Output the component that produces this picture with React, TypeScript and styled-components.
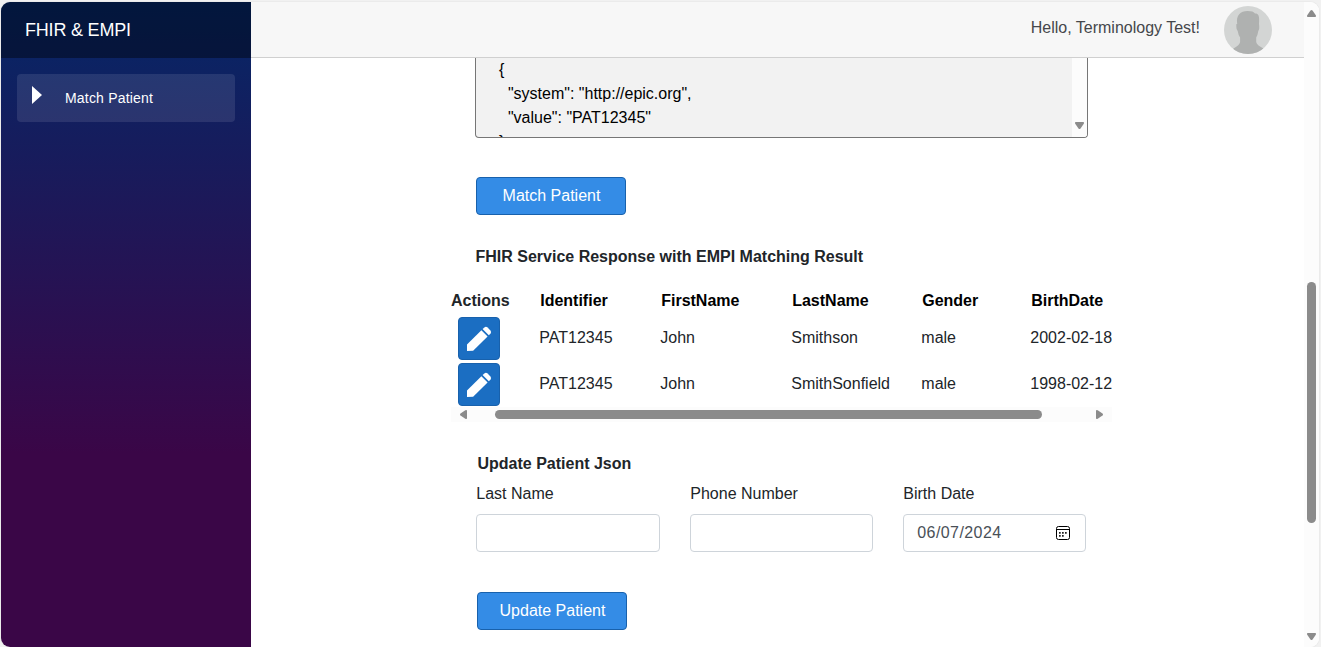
import React from "react";
import styled, { createGlobalStyle } from "styled-components";

const GlobalStyle = createGlobalStyle`
  *, *::before, *::after { box-sizing: border-box; }
  html, body { margin: 0; height: 100%; overflow: hidden; }
  body {
    background: #f1f1f1;
    color: #212529;
    font: 16px/24px "Liberation Sans", Arial, sans-serif;
  }
`;

const Frame = styled.div`
  display: flex;
  width: 1318px;
  height: 645px;
  margin: 2px 0 0 1px;
  border-radius: 9px;
  overflow: hidden;
  background: #fff;
  box-shadow: 0 0 0 1px #ebebeb;
`;

const Sidebar = styled.aside`
  flex: none;
  width: 250px;
  background: linear-gradient(180deg, rgb(5, 39, 103) 0%, #3a0647 70%);
`;

const Brand = styled.div`
  display: flex;
  align-items: center;
  height: 56px;
  padding: 0 24px;
  background: rgba(0, 0, 0, 0.4);
  color: #fff;
  font-size: 18px;
  letter-spacing: -0.2px;
`;

const NavItem = styled.a`
  display: flex;
  align-items: center;
  height: 48px;
  margin: 16px;
  padding: 0 15px;
  border-radius: 4px;
  background: rgba(255, 255, 255, 0.1);
  color: #fff;
  font-size: 14px;
  letter-spacing: 0.19px;

  svg {
    margin: 0 23px 6px 0;
  }
`;

const Main = styled.main`
  flex: 1;
  min-width: 0;
  display: flex;
  flex-direction: column;
`;

const TopBar = styled.header`
  flex: none;
  display: flex;
  align-items: center;
  justify-content: flex-end;
  height: 56px;
  padding-right: 32px;
  border-bottom: 1px solid #d0d0d0;
  background: #f7f7f7;
`;

const Greeting = styled.span`
  margin: 0 24px 4px 0;
  color: #45474b;
`;

const Content = styled.div`
  display: flex;
  flex-direction: column;
  align-items: flex-start;
  padding-left: 224px;
`;

const JsonBox = styled.div`
  display: flex;
  justify-content: space-between;
  width: 613px;
  height: 80px;
  overflow: hidden;
  border: 1px solid #767676;
  border-top: 0;
  border-radius: 0 0 4px 4px;
  background: #f2f2f2;
  color: #000;
`;

const Json = styled.pre`
  margin: 0;
  padding-left: 23px;
  font: inherit;
`;

const JsonTrack = styled.div`
  display: flex;
  align-items: flex-end;
  justify-content: center;
  width: 15px;
  padding-bottom: 8px;
  background: #fcfcfc;
`;

const Button = styled.button<{ $top: number; $left: number }>`
  width: 150px;
  height: 38px;
  margin: ${(p) => p.$top}px 0 0 ${(p) => p.$left}px;
  padding: 0 0 0 1px;
  border: 1px solid #1861ac;
  border-radius: 4px;
  background: #348ce6;
  color: #fff;
  font: inherit;
  line-height: 36px;
`;

const Heading = styled.h2<{ $top: number; $left: number }>`
  margin: ${(p) => p.$top}px 0 0 ${(p) => p.$left}px;
  font-size: 16px;
  line-height: 24px;
  font-weight: 700;
`;

const TableScroller = styled.div`
  width: 661px;
  margin: 19px 0 0 -24px;
  overflow: hidden;
`;

const Table = styled.table`
  width: 661px;
  table-layout: fixed;
  border-collapse: collapse;
  white-space: nowrap;
`;

const Th = styled.th<{ $muted?: boolean }>`
  height: 26px;
  padding: 0 0 1px ${(p) => (p.$muted ? 0 : 1.2)}px;
  color: ${(p) => (p.$muted ? "#212529" : "#000")};
  text-align: left;
  font-weight: 700;
`;

const ActionCell = styled.td`
  height: 46px;
  padding: 0;
`;

const Td = styled.td`
  height: 46px;
  padding: 2px 0 0 0.3px;
  line-height: 20px;
`;

const EditButton = styled.button`
  display: flex;
  align-items: center;
  justify-content: center;
  width: 42px;
  height: 43px;
  margin: 3px 0 0 7px;
  padding: 0;
  border: 1px solid #1861ac;
  border-radius: 4px;
  background: #1b6ec2;
  color: #fff;
`;

const HTrack = styled.div`
  display: flex;
  align-items: center;
  height: 15px;
  margin-top: 1px;
  padding: 0 8px 0 9px;
  background: #fcfcfc;
`;

const HThumb = styled.div`
  width: 547px;
  height: 9px;
  margin: 0 54px 0 28px;
  border-radius: 5px;
  background: #8b8b8b;
`;

const Fields = styled.div`
  display: grid;
  grid-template-columns: 184px 183px 183px;
  column-gap: 30px;
  margin: 6px 0 0 1px;
`;

const Field = styled.label`
  display: block;
  text-indent: 0.3px;
`;

const Input = styled.div`
  display: flex;
  align-items: center;
  justify-content: space-between;
  height: 38px;
  margin-top: 8px;
  padding: 0 15px 0 13px;
  border: 1px solid #ced4da;
  border-radius: 4px;
  color: #495057;
  letter-spacing: 0.42px;
`;

const VTrack = styled.div`
  flex: none;
  display: flex;
  flex-direction: column;
  align-items: center;
  justify-content: space-between;
  width: 15px;
  padding: 8px 0 7px;
  background: #fcfcfc;
`;

const VThumb = styled.div`
  width: 9px;
  height: 241px;
  margin-top: 154px;
  border-radius: 5px;
  background: #8b8b8b;
`;

type Direction = "up" | "down" | "left" | "right";

const turns: Record<Direction, number> = { up: 0, right: 90, down: 180, left: 270 };

const Arrow = ({ direction }: { direction: Direction }) => {
  const sideways = direction === "left" || direction === "right";
  return (
    <svg
      width={sideways ? 7 : 9}
      height={sideways ? 9 : 7}
      viewBox={sideways ? "-3.5 -4.5 7 9" : "-4.5 -3.5 9 7"}
      style={{ flex: "none" }}
    >
      <path
        transform={`rotate(${turns[direction]})`}
        d="M-1-3Q0-4 1-3L4.3 1.8Q4.8 3.5 3.8 3.5H-3.8Q-4.8 3.5-4.3 1.8Z"
        fill="#8b8b8b"
      />
    </svg>
  );
};

const Pencil = () => (
  <svg width="26" height="26" viewBox="0 0 26 26" fill="currentColor">
    <path d="M1 25.1V18.6L15.4 4.2L21.6 10.4L7.1 24.7Z" />
    <path d="M16.6 3.1L18.4 1.4Q20 .2 21.6 1.6L24.4 4.4Q25.8 6 24.6 7.5L22.8 9.3Z" />
  </svg>
);

const Calendar = () => (
  <svg width="14" height="14" viewBox="0 0 14 14">
    <rect x=".5" y=".5" width="13" height="13" rx="2" fill="none" stroke="#000" />
    <path d="M1 3.5H13" stroke="#000" />
    <path
      d="M3 6h1.7v1.7H3zM6 6h1.7v1.7H6zM9 6h1.7v1.7H9zM3 9h1.7v1.7H3zM6 9h1.7v1.7H6z"
      fill="#222"
    />
  </svg>
);

const Avatar = () => (
  <svg width="48" height="48" viewBox="0 0 48 48">
    <clipPath id="avatar-circle">
      <circle cx="24" cy="24" r="24" />
    </clipPath>
    <g clipPath="url(#avatar-circle)">
      <path d="M0 0H48V48H0Z" fill="#d3d5d4" />
      <path
        d="M13.2 18C11.8 9 16.5 5 23.5 5C27.5 5 30 5.8 31 7.5C34.8 7.5 35.6 10 35 18Q35.8 23 34.3 25Q33.6 29.5 32.2 31.5V36Q32.6 39 39.5 42.5L42 48H6L9.5 42.5Q15.7 39 16.1 36V31.5Q14.4 29.5 13.7 25Q11.9 23 12.4 18Z"
        fill="#afb1b0"
      />
    </g>
  </svg>
);

const columns = ["Identifier", "FirstName", "LastName", "Gender", "BirthDate"];
const patients = [
  ["PAT12345", "John", "Smithson", "male", "2002-02-18"],
  ["PAT12345", "John", "SmithSonfield", "male", "1998-02-12"],
];

export default function App() {
  return (
    <>
      <GlobalStyle />
      <Frame>
        <Sidebar>
          <Brand>FHIR &amp; EMPI</Brand>
          <NavItem>
            <svg width="10" height="18" viewBox="0 0 10 18">
              <path d="M0 0L10 9L0 18Z" fill="#fff" />
            </svg>
            Match Patient
          </NavItem>
        </Sidebar>
        <Main>
          <TopBar>
            <Greeting>Hello, Terminology Test!</Greeting>
            <Avatar />
          </TopBar>
          <Content>
            <JsonBox>
              <Json>{`{\n  "system": "http://epic.org",\n  "value": "PAT12345"\n}`}</Json>
              <JsonTrack>
                <Arrow direction="down" />
              </JsonTrack>
            </JsonBox>
            <Button $top={39} $left={1}>Match Patient</Button>
            <Heading $top={30} $left={0.5}>FHIR Service Response with EMPI Matching Result</Heading>
            <TableScroller>
              <Table>
                <colgroup>
                  {[88, 121, 131, 130, 109, 82].map((width, i) => (
                    <col key={i} width={width} />
                  ))}
                </colgroup>
                <thead>
                  <tr>
                    <Th $muted>Actions</Th>
                    {columns.map((name) => (
                      <Th key={name}>{name}</Th>
                    ))}
                  </tr>
                </thead>
                <tbody>
                  {patients.map((patient, row) => (
                    <tr key={row}>
                      <ActionCell>
                        <EditButton aria-label="Edit">
                          <Pencil />
                        </EditButton>
                      </ActionCell>
                      {patient.map((value, i) => (
                        <Td key={i}>{value}</Td>
                      ))}
                    </tr>
                  ))}
                </tbody>
              </Table>
              <HTrack>
                <Arrow direction="left" />
                <HThumb />
                <Arrow direction="right" />
              </HTrack>
            </TableScroller>
            <Heading $top={30} $left={2.5}>Update Patient Json</Heading>
            <Fields>
              <Field>
                Last Name
                <Input />
              </Field>
              <Field>
                Phone Number
                <Input />
              </Field>
              <Field>
                Birth Date
                <Input>
                  06/07/2024
                  <Calendar />
                </Input>
              </Field>
            </Fields>
            <Button $top={40} $left={2}>Update Patient</Button>
          </Content>
        </Main>
        <VTrack>
          <Arrow direction="up" />
          <VThumb />
          <Arrow direction="down" />
        </VTrack>
      </Frame>
    </>
  );
}
